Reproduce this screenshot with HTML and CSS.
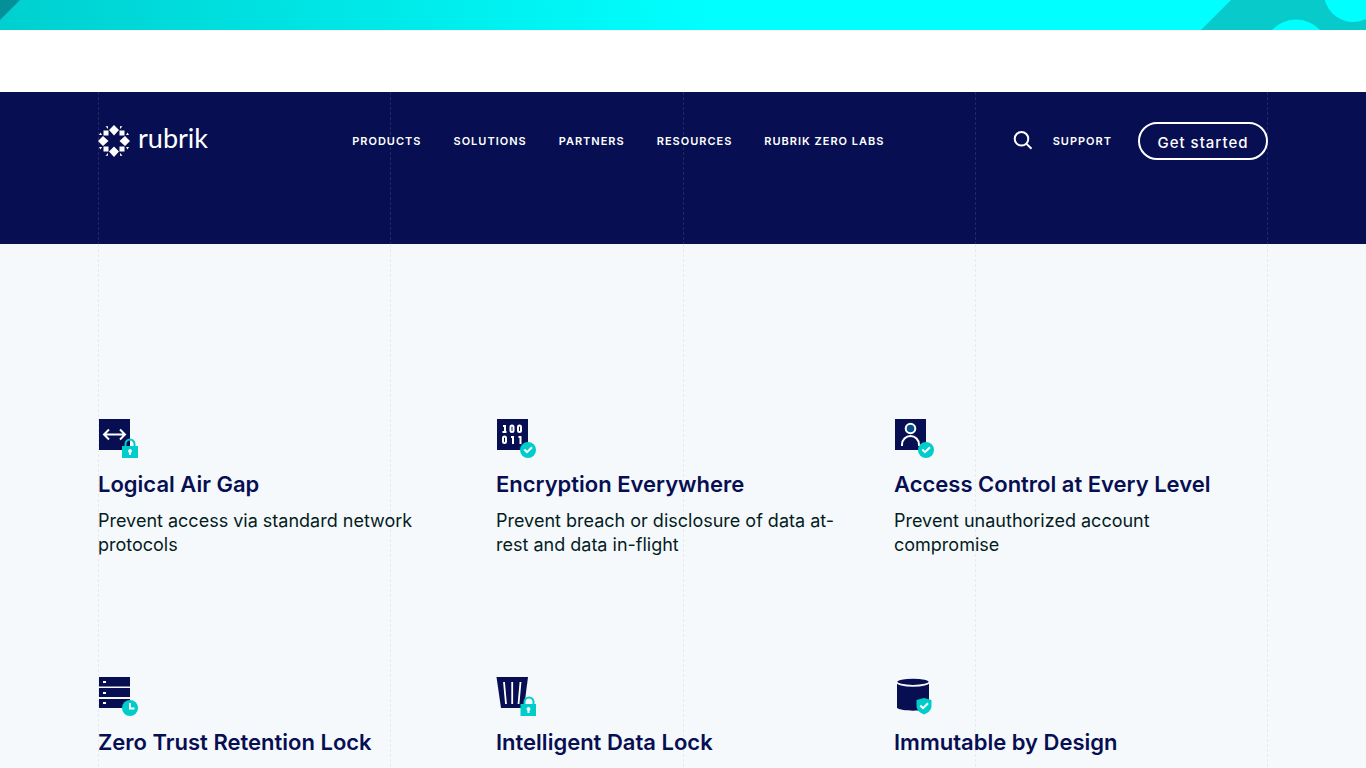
FILE: index.html
```
<!DOCTYPE html>
<html lang="en">
<head>
<meta charset="utf-8">
<meta name="viewport" content="width=device-width, initial-scale=1">
<title>Rubrik</title>
<link rel="stylesheet" href="styles.css">
</head>
<body>
<div class="banner">
  <svg class="banner-left" width="20" height="30" viewBox="0 0 20 30" aria-hidden="true"><path d="M0 0H20L0 20Z" fill="#058f98"/></svg>
  <svg class="banner-right" width="166" height="30" viewBox="0 0 166 30" aria-hidden="true"><path d="M31 0H166V30H1Z" fill="#08caca"/><circle cx="96" cy="52" r="32.500" fill="#0ff"/><circle cx="153" cy="-7" r="29" fill="#0ff"/></svg>
</div>
<header class="header">
  <div class="container lines lines-dark">
    <div class="bar">
      <a class="logo" href="#" aria-label="rubrik">
        <svg width="32" height="32" viewBox="0 0 32 32" fill="#fff" aria-hidden="true">
          <path d="M16 0l5 5-5 5.500L11 5zM16 21.500l5 5-5 5.500-5-5.500zM5 11l5.500 5L5 21l-5-5zM27 11l5 5-5 5-5.500-5z"/>
          <path d="M5.500 5.500h5v5h-5zM21.500 5.500h5v5h-5zM5.500 21.500h5v5h-5zM21.500 21.500h5v5h-5z"/>
          <path d="M7.500 1.200h2.500V4zM24.500 1.200H22V4zM7.500 30.800h2.500V28zM24.500 30.800H22V28zM1 10l1.500-2.500L4 10zM1 22h3l-1.500 2.500zM31 10l-1.500-2.500L28 10zM31 22h-3l1.500 2.500z"/>
        </svg>
        <span class="wordmark">rubrik</span>
      </a>
      <nav class="menu" aria-label="Main">
        <a href="#">PRODUCTS</a>
        <a href="#">SOLUTIONS</a>
        <a href="#">PARTNERS</a>
        <a href="#">RESOURCES</a>
        <a href="#">RUBRIK ZERO LABS</a>
      </nav>
      <div class="tools">
        <button class="search" type="button" aria-label="Search">
          <svg width="20" height="20" viewBox="0 0 20 20" fill="none" stroke="#fff" stroke-width="2" aria-hidden="true"><circle cx="8.500" cy="7.800" r="6.800"/><path d="M13.300 12.600L18.500 17.800"/></svg>
        </button>
        <a class="support" href="#">SUPPORT</a>
        <button class="start" type="button">Get started</button>
      </div>
    </div>
  </div>
</header>
<main class="main">
  <div class="container lines lines-light">
    <div class="features">
      <article class="feature">
        <svg width="40" height="40" viewBox="0 0 40 40" aria-hidden="true">
          <path d="M1 1h31v31H1z" fill="#070f52"/>
          <path d="M6 16.500h21M11 11.500l-5 5 5 5M22 11.500l5 5-5 5" fill="none" stroke="#fff" stroke-width="2"/>
          <path d="M27.500 29v-3a4.500 4.500 0 0 1 9 0v3" fill="none" stroke="#00cccb" stroke-width="2"/>
          <path d="M24 28h16v12H24z" fill="#00cccb"/><path d="M32 31a2 2 0 0 1 1 3.700V37h-2v-2.300A2 2 0 0 1 32 31z" fill="#fff"/>
        </svg>
        <h3>Logical Air Gap</h3>
        <p>Prevent access via standard network protocols</p>
      </article>
      <article class="feature">
        <svg width="40" height="40" viewBox="0 0 40 40" aria-hidden="true">
          <path d="M1 1h31v31H1z" fill="#070f52"/>
          <g fill="none" stroke="#fff" stroke-width="2"><path d="M7 8h2v6M6.500 14h4M15 19h2v7M22.500 19h2v7"/><rect x="14.500" y="7.500" width="3" height="6.500" rx="1.500"/><rect x="22" y="7.500" width="3" height="6.500" rx="1.500"/><rect x="7" y="18.500" width="3" height="6.500" rx="1.500"/></g>
          <circle cx="32" cy="32" r="8" fill="#00cccb"/><path d="M28.300 31.500l2.700 2.700 5-5" fill="none" stroke="#fff" stroke-width="2"/>
        </svg>
        <h3>Encryption Everywhere</h3>
        <p>Prevent breach or disclosure of data at-rest and data in-flight</p>
      </article>
      <article class="feature">
        <svg width="40" height="40" viewBox="0 0 40 40" aria-hidden="true">
          <path d="M1 1h31v31H1z" fill="#070f52"/>
          <circle cx="16.500" cy="10.500" r="4.800" fill="#07518a" stroke="#fff" stroke-width="2"/>
          <path d="M8 28v-1.500a8.500 8.500 0 0 1 17 0V28" fill="none" stroke="#fff" stroke-width="2"/>
          <circle cx="32" cy="32" r="8" fill="#00cccb"/><path d="M28.300 31.500l2.700 2.700 5-5" fill="none" stroke="#fff" stroke-width="2"/>
        </svg>
        <h3>Access Control at Every Level</h3>
        <p>Prevent unauthorized account compromise</p>
      </article>
      <article class="feature">
        <svg width="40" height="40" viewBox="0 0 40 40" aria-hidden="true">
          <path d="M1 1h31v9.500H1zM1 12h31v9H1zM1 23h31v9H1z" fill="#070f52"/>
          <path d="M5 5h3v2H5zM5 16h3v2H5zM5 26h3v2H5z" fill="#fff"/>
          <circle cx="32" cy="32" r="8" fill="#00cccb"/><path d="M32 27v5.500h4.500" fill="none" stroke="#fff" stroke-width="2"/>
        </svg>
        <h3>Zero Trust Retention Lock</h3>
      </article>
      <article class="feature">
        <svg width="40" height="40" viewBox="0 0 40 40" aria-hidden="true">
          <path d="M.5 1H32l-4 31H5z" fill="#070f52"/>
          <path d="M8 6l2 22M16.200 6v22M24.500 6l-2 22" fill="none" stroke="#fff" stroke-width="1.800"/>
          <path d="M28.500 29v-3a4.500 4.500 0 0 1 9 0v3" fill="none" stroke="#00cccb" stroke-width="2"/>
          <path d="M24.500 28H40v12H24.500z" fill="#00cccb"/><path d="M32.500 31a2 2 0 0 1 1 3.700V37h-2v-2.300a2 2 0 0 1 1-3.700z" fill="#fff"/>
        </svg>
        <h3>Intelligent Data Lock</h3>
      </article>
      <article class="feature">
        <svg width="40" height="40" viewBox="0 0 40 40" aria-hidden="true">
          <path d="M3 6.500c5 4 27 4 32 0V32c-5 3.500-27 3.500-32 0z" fill="#070f52"/>
          <ellipse cx="19" cy="5.800" rx="16.500" ry="4" fill="#070f52" stroke="#f5f9fc" stroke-width="1.800"/>
          <path d="M30 22l7.500 2v6c0 4-3.500 7-7.500 8.500-4-1.500-7.500-4.500-7.500-8.500v-6z" fill="#00cccb"/><path d="M26.300 29.500l2.700 2.700 5-5" fill="none" stroke="#fff" stroke-width="2"/>
        </svg>
        <h3>Immutable by Design</h3>
      </article>
    </div>
  </div>
</main>
</body>
</html>
```
FILE: styles.css
```
* { box-sizing: border-box; }
html { overflow: hidden; }
body {
  margin: 0;
  min-height: 100vh;
  display: flex;
  flex-direction: column;
  font-family: Inter, sans-serif;
  color: #041c1c;
  background: #fff;
}
a { color: inherit; text-decoration: none; }
button { font: inherit; color: inherit; background: none; border: 0; padding: 0; cursor: pointer; }
svg { display: block; flex: none; }

.banner {
  display: flex;
  justify-content: space-between;
  margin-bottom: 62px;
  background: linear-gradient(80deg, #00cfcf, #0ff 52%);
}
.container { width: 100%; max-width: 1170px; margin: 0 auto; }

/* dotted vertical guides at each quarter of the content width */
.lines {
  --guide: repeating-linear-gradient(var(--dash) 0 3px, transparent 3px 5px);
  background: var(--guide) 0 0, var(--guide) 25% 0, var(--guide) 50% 0, var(--guide) 75% 0, var(--guide) 100% 0;
  background-size: 1px 100%;
  background-repeat: no-repeat;
}
.lines-dark { --dash: #222960; }
.lines-light { --dash: #e6ebf0; }

.header { background: #070f52; color: #fff; }
.bar {
  display: flex;
  align-items: center;
  padding: 30px 0 84px;
}
.logo { display: flex; align-items: center; gap: 8px; height: 38px; }
.wordmark { padding-bottom: 6px; font-family: Lato, sans-serif; font-size: 27px; font-weight: 400; line-height: 32px; }
.menu, .support { font-size: 11px; font-weight: 600; line-height: 16px; letter-spacing: 1px; }
.menu { display: flex; gap: 32px; margin: 0 auto; padding-left: 16px; }
.tools { display: flex; align-items: center; }
.search { margin-right: 20px; }
.support { margin-right: 26px; }
.start {
  width: 130px;
  height: 38px;
  padding-top: 2px;
  border: 2px solid #fff;
  border-radius: 19px;
  font-size: 15px;
  font-weight: 500;
  letter-spacing: 1px;
}

.main { flex: 1; display: flex; background: #f5f9fc; }
.main .container { padding-top: 174px; }
.features {
  display: grid;
  grid-template-columns: repeat(3, 1fr);
  gap: 119px 24px;
}
.feature h3 {
  margin: 12px 0 11px;
  font-size: 22px;
  font-weight: 600;
  line-height: 28px;
  color: #070f52;
}
.feature p { margin: 0; max-width: 340px; font-size: 18px; line-height: 24px; }
```
